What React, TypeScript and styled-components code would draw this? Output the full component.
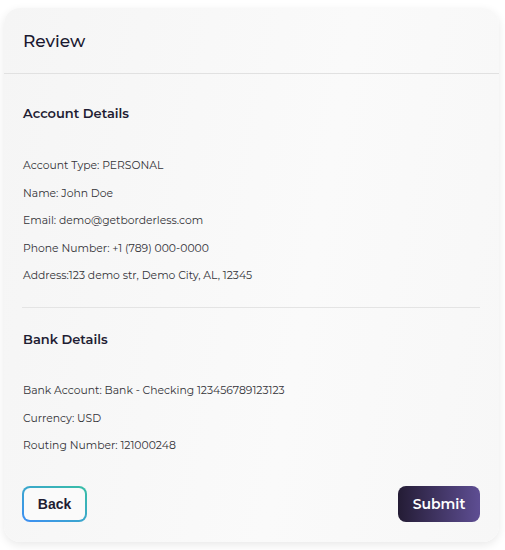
import styled, { createGlobalStyle } from "styled-components";

const GlobalStyle = createGlobalStyle`
  body {
    margin: 0;
    background: #ffffff;
    font-family: "Montserrat", "Noto Sans", "Liberation Sans", sans-serif;
  }
`;

const accountRows = [
  "Account Type: PERSONAL",
  "Name: John Doe",
  "Email: demo@getborderless.com",
  "Phone Number: +1 (789) 000-0000",
  "Address:123 demo str, Demo City, AL, 12345",
];

const bankRows = [
  "Bank Account: Bank - Checking 123456789123123",
  "Currency: USD",
  "Routing Number: 121000248",
];

const App = () => {
  return (
    <Page>
      <GlobalStyle />
      <Card>
        <Header>
          <Title>Review</Title>
        </Header>
        <Body>
          <Section>
            <SectionTitle>Account Details</SectionTitle>
            <Rows $top={29}>
              {accountRows.map((r) => (
                <Row key={r}>{r}</Row>
              ))}
            </Rows>
          </Section>
          <Divider />
          <Section>
            <SectionTitle>Bank Details</SectionTitle>
            <Rows $top={28.5}>
              {bankRows.map((r) => (
                <Row key={r}>{r}</Row>
              ))}
            </Rows>
          </Section>
          <Footer>
            <BackButton>
              <span>Back</span>
            </BackButton>
            <SubmitButton>Submit</SubmitButton>
          </Footer>
        </Body>
      </Card>
    </Page>
  );
};

const Page = styled.div`
  padding: 8px 6px 8px 4px;
`;

const Card = styled.div`
  width: 495px;
  box-sizing: border-box;
  border-radius: 16px;
  background: linear-gradient(100deg, #f5f5f5 0%, #fafafa 60%, #f7f7f7 100%);
  box-shadow: 0px 3px 10px rgba(0, 0, 0, 0.09);
`;

const Header = styled.div`
  height: 65px;
  display: flex;
  align-items: center;
  padding: 0 19px;
  border-bottom: 1px solid #e1e1e1;
`;

const Title = styled.div`
  font-size: 17px;
  font-weight: 500;
  color: #1a1830;
`;

const Body = styled.div`
  padding: 29px 19px 20px 18px;
`;

const Section = styled.div`
  display: flex;
  flex-direction: column;
  padding-left: 1px;
`;

const SectionTitle = styled.div`
  font-size: 13px;
  line-height: 20px;
  font-weight: 600;
  color: #1f1d33;
`;

const Rows = styled.div<{ $top: number }>`
  margin-top: ${({ $top }) => $top}px;
  display: flex;
  flex-direction: column;
`;

const Row = styled.div`
  height: 27.5px;
  line-height: 27.5px;
  font-size: 10.8px;
  color: #333338;
`;

const Divider = styled.div`
  height: 1px;
  background: #e4e4e4;
  margin: 17px 0 21px;
`;

const Footer = styled.div`
  margin-top: 26px;
  display: flex;
  justify-content: space-between;
  align-items: center;
`;

const BackButton = styled.button`
  height: 36px;
  width: 65px;
  padding: 2px;
  border: none;
  border-radius: 8px;
  background: linear-gradient(to top right, #3d8ef5, #38bfa4);
  cursor: pointer;
  span {
    display: flex;
    align-items: center;
    justify-content: center;
    height: 100%;
    border-radius: 6px;
    background: #fafafa;
    font-family: inherit;
    font-size: 14px;
    font-weight: 600;
    color: #1f1d33;
  }
`;

const SubmitButton = styled.button`
  height: 36px;
  width: 82px;
  border: none;
  border-radius: 8px;
  background: linear-gradient(to right, #241c35, #5e4e93);
  color: #ffffff;
  font-family: inherit;
  font-size: 14px;
  font-weight: 600;
  cursor: pointer;
`;

export default App;
